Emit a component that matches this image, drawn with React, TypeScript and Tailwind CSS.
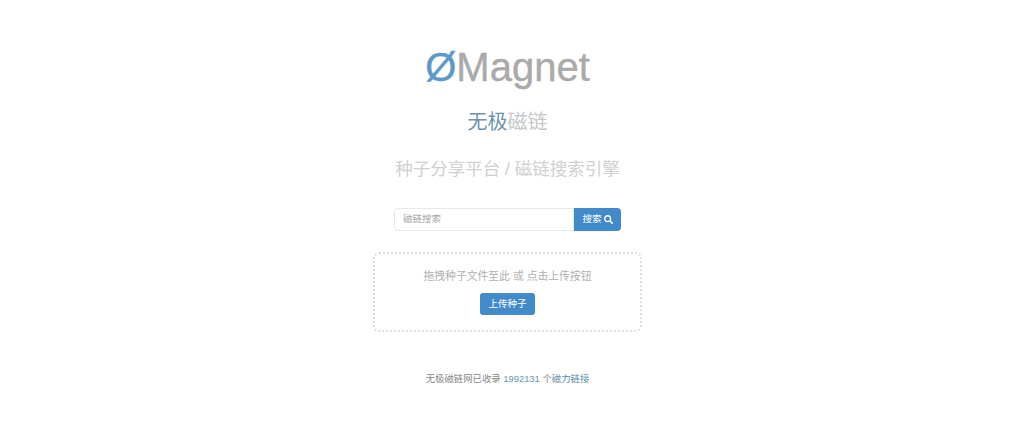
import { FaSearch } from 'react-icons/fa';

const font = { fontFamily: '"Liberation Sans", "Noto Sans CJK SC", sans-serif' };

export default function App() {
  return (
    <div className="flex min-h-[436px] flex-col items-center bg-white pl-[2px]" style={font}>
      {/* Logo */}
      <h1 className="mt-[40px] h-[54px] text-[40px] leading-[54px] text-[#aaaaaa] [-webkit-text-stroke:0.4px]">
        <span className="text-[#5b9ac8]">Ø</span>Magnet
      </h1>

      <h2 className="mt-[14px] text-[20px] leading-[28px] text-[#c4c8cb]">
        <span className="text-[#6a94ae]">无极</span>磁链
      </h2>

      <h3 className="mt-[19px] text-[17.5px] leading-[28px] text-[#d0d0d0]">种子分享平台 / 磁链搜索引擎</h3>

      {/* Search */}
      <form className="mt-[25px] flex h-[23px] w-[227px] text-[10px]">
        <input
          placeholder="磁链搜索"
          className="min-w-0 flex-1 rounded-l-[4px] border border-[#e6e9ec] bg-white px-2 text-[9.5px] outline-none placeholder:text-[#a5a5a5]"
        />
        <button
          type="button"
          className="flex w-[47px] items-center justify-center gap-[2px] rounded-r-[4px] bg-[#428bca] text-[9.5px] text-white"
        >
          搜索 <FaSearch className="h-[9px] w-[9px]" />
        </button>
      </form>

      {/* Upload drop zone */}
      <div className="mt-[21px] flex h-[80px] w-[269px] flex-col items-center rounded-[6px] border-2 border-dotted border-[#dde0e3]">
        <p className="mt-[14px] text-[10.8px] leading-[16px] text-[#b0b0b0]">拖拽种子文件至此 或 点击上传按钮</p>
        <button
          type="button"
          className="mt-[9px] h-[22px] w-[55px] rounded-[3px] bg-[#428bca] text-[9.5px] text-white"
        >
          上传种子
        </button>
      </div>

      <p className="mt-[40px] text-[9.4px] leading-[14px] text-[#888888]">
        无极磁链网已收录 <span className="text-[#6a94ae]">1992131</span> 个<span className="text-[#5f8cab]">磁力链接</span>
      </p>
    </div>
  );
}
